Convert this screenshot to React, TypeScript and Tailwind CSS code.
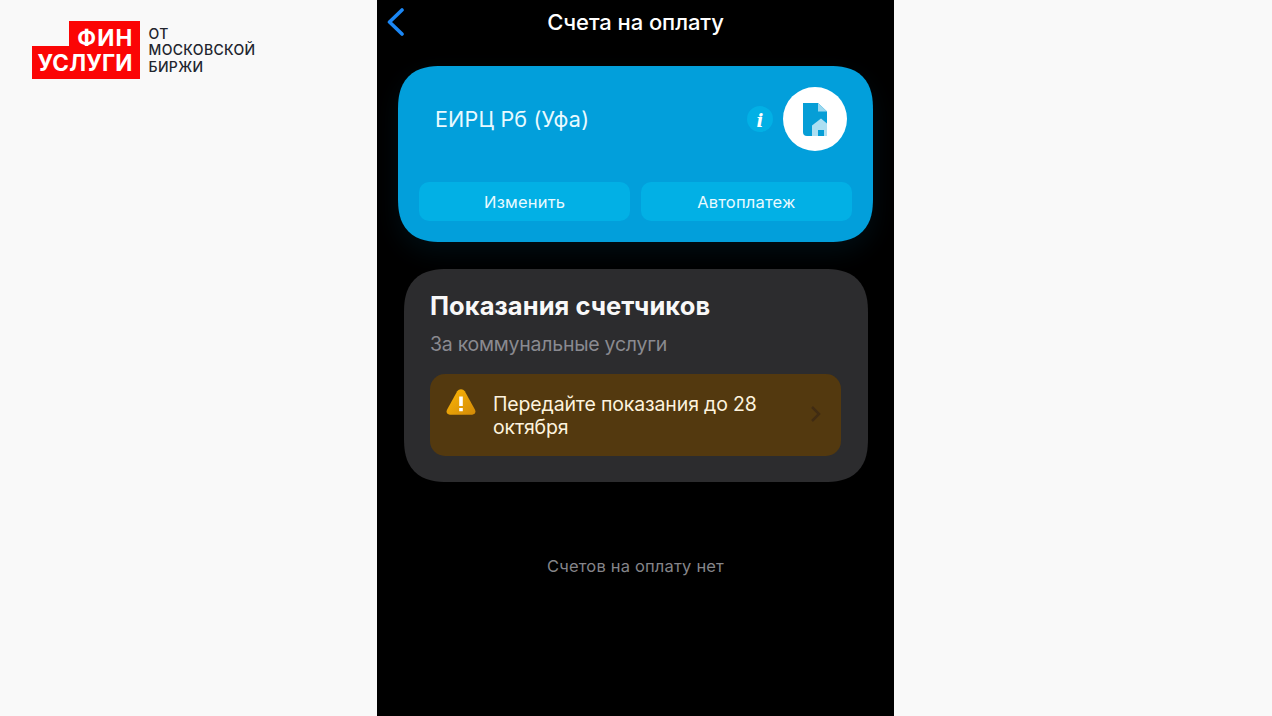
import type { ReactNode } from 'react';

const Logo = () => (
  <div className="flex pl-[31.5px] pt-[21px]">
    <div className="flex w-[108px] flex-col items-end font-bold text-white">
      <div className="h-[25px] w-[71px] bg-[#fb0505] pr-[6px] text-right text-[22.5px] leading-[34px] tracking-[1.2px]">
        ФИН
      </div>
      <div className="h-[32.5px] w-full bg-[#fb0505] pr-[7px] text-right text-[22.5px] leading-[34px] tracking-[0.15px]">
        УСЛУГИ
      </div>
    </div>
    <div className="ml-[9px] mt-[4.5px] text-[14px] font-medium leading-[16.5px] tracking-[0.35px] text-[#22252e]">
      <div>ОТ</div>
      <div>МОСКОВСКОЙ</div>
      <div>БИРЖИ</div>
    </div>
  </div>
);

const DocumentHomeIcon = () => (
  <svg className="h-[33px] w-6" viewBox="0 0 24 33">
    <path d="M0 0H15L24 8.5V33H4Q0 33 0 29Z" fill="#069ed6" />
    <path d="M15 0L24 8.5H15Z" fill="#9ad8f0" />
    <path d="M9 22.5L18 15.5L24 20.5V33H9Z" fill="#addff2" />
    <path d="M15 27H21V33H15Z" fill="#069ed6" />
  </svg>
);

const WarningIcon = () => (
  <svg className="h-[26px] w-[30px] shrink-0" viewBox="0 0 30 26">
    <defs>
      <linearGradient id="warning" x1="0" y1="0" x2="1" y2="1">
        <stop offset="0" stopColor="#fdb705" />
        <stop offset="1" stopColor="#d28a08" />
      </linearGradient>
    </defs>
    <path
      d="M11.2 2.3C13-.5 17-.5 18.8 2.3L29 20.8C30.2 23.3 28.8 25.7 26.2 25.7H3.8C1.2 25.7-.2 23.3 1 20.8Z"
      fill="url(#warning)"
    />
    <path d="M13.2 7.5H16.8V17H13.2ZM13.2 19H16.8V22.3H13.2Z" fill="#fff" />
  </svg>
);

const ActionButton = ({ children }: { children: ReactNode }) => (
  <button className="h-[39.5px] flex-1 rounded-[10px] bg-[#02b0e5] pt-[2.5px] text-[16.5px] tracking-[0.2px] text-[#e9faff]">
    {children}
  </button>
);

const AccountCard = () => (
  <section className="ml-[21px] mt-[22px] h-[176px] w-[475px] rounded-[44px] bg-[#029fdb] px-[21px] pt-[21px] shadow-[0_10px_26px_rgba(2,159,219,0.09)] [corner-shape:superellipse(1.35)]">
    <div className="flex h-16 items-center pl-4 pr-[5px]">
      <h2 className="flex-1 text-[21.5px] tracking-[0.2px] text-[#e9faff]">ЕИРЦ Рб (Уфа)</h2>
      <span className="mr-2.5 flex size-[26px] items-center justify-center rounded-full bg-[#02b0e5] pt-0.5 font-['DejaVu_Serif',serif] text-[18px] font-bold italic text-white">
        i
      </span>
      <span className="flex size-16 items-center justify-center rounded-full bg-white">
        <DocumentHomeIcon />
      </span>
    </div>
    <div className="mt-[30.5px] flex gap-[10.5px]">
      <ActionButton>Изменить</ActionButton>
      <ActionButton>Автоплатеж</ActionButton>
    </div>
  </section>
);

const MetersCard = () => (
  <section className="ml-[26.5px] mt-[26.5px] h-[213px] w-[464.5px] rounded-[44px] bg-[#2c2c2e] px-[26.5px] pt-[20px] [corner-shape:superellipse(1.35)]">
    <h2 className="whitespace-nowrap text-[25.5px] font-bold leading-[34px] tracking-[0.05px] text-[#f8f8f8]">
      Показания счетчиков
    </h2>
    <p className="mt-2 whitespace-nowrap text-[19.5px] leading-[26px] tracking-[-0.25px] text-[#8a8a90]">
      За коммунальные услуги
    </p>
    <div className="mt-[17.5px] flex h-[82px] w-[411px] rounded-[15px] bg-[#53390f] pl-4 pr-5 pt-[15px]">
      <WarningIcon />
      <p className="ml-[17px] mt-[4px] flex-1 whitespace-nowrap text-[19.5px] leading-[23px] tracking-[-0.15px] text-[#fdf3de]">
        Передайте показания до 28
        <br />
        октября
      </p>
      <svg className="mt-[17px] h-4 w-[11px]" viewBox="0 0 11 16" fill="none" stroke="#412c13" strokeWidth="2.5">
        <path d="M2 1L9 8L2 15" />
      </svg>
    </div>
  </section>
);

export default function App() {
  return (
    <div className="flex h-[716px] w-[1272px] overflow-hidden bg-[#f9f9f9] font-['Inter','Liberation_Sans',sans-serif]">
      <aside className="w-[377px] shrink-0">
        <Logo />
      </aside>
      <main className="h-full w-[517px] shrink-0 bg-black">
        <header className="flex h-11 items-center pl-2.5">
          <svg className="h-7 w-[18px]" viewBox="0 0 18 28" fill="none" stroke="#1b87f5" strokeWidth="3.6" strokeLinecap="round" strokeLinejoin="round">
            <path d="M15 2L2.5 14L15 26" />
          </svg>
          <h1 className="flex-1 pr-7 text-center text-[22px] font-medium tracking-[-0.08px] text-white">
            Счета на оплату
          </h1>
        </header>
        <AccountCard />
        <MetersCard />
        <p className="mt-[72px] text-center text-[16.5px] leading-6 tracking-[0.18px] text-[#85858a]">
          Счетов на оплату нет
        </p>
      </main>
    </div>
  );
}
